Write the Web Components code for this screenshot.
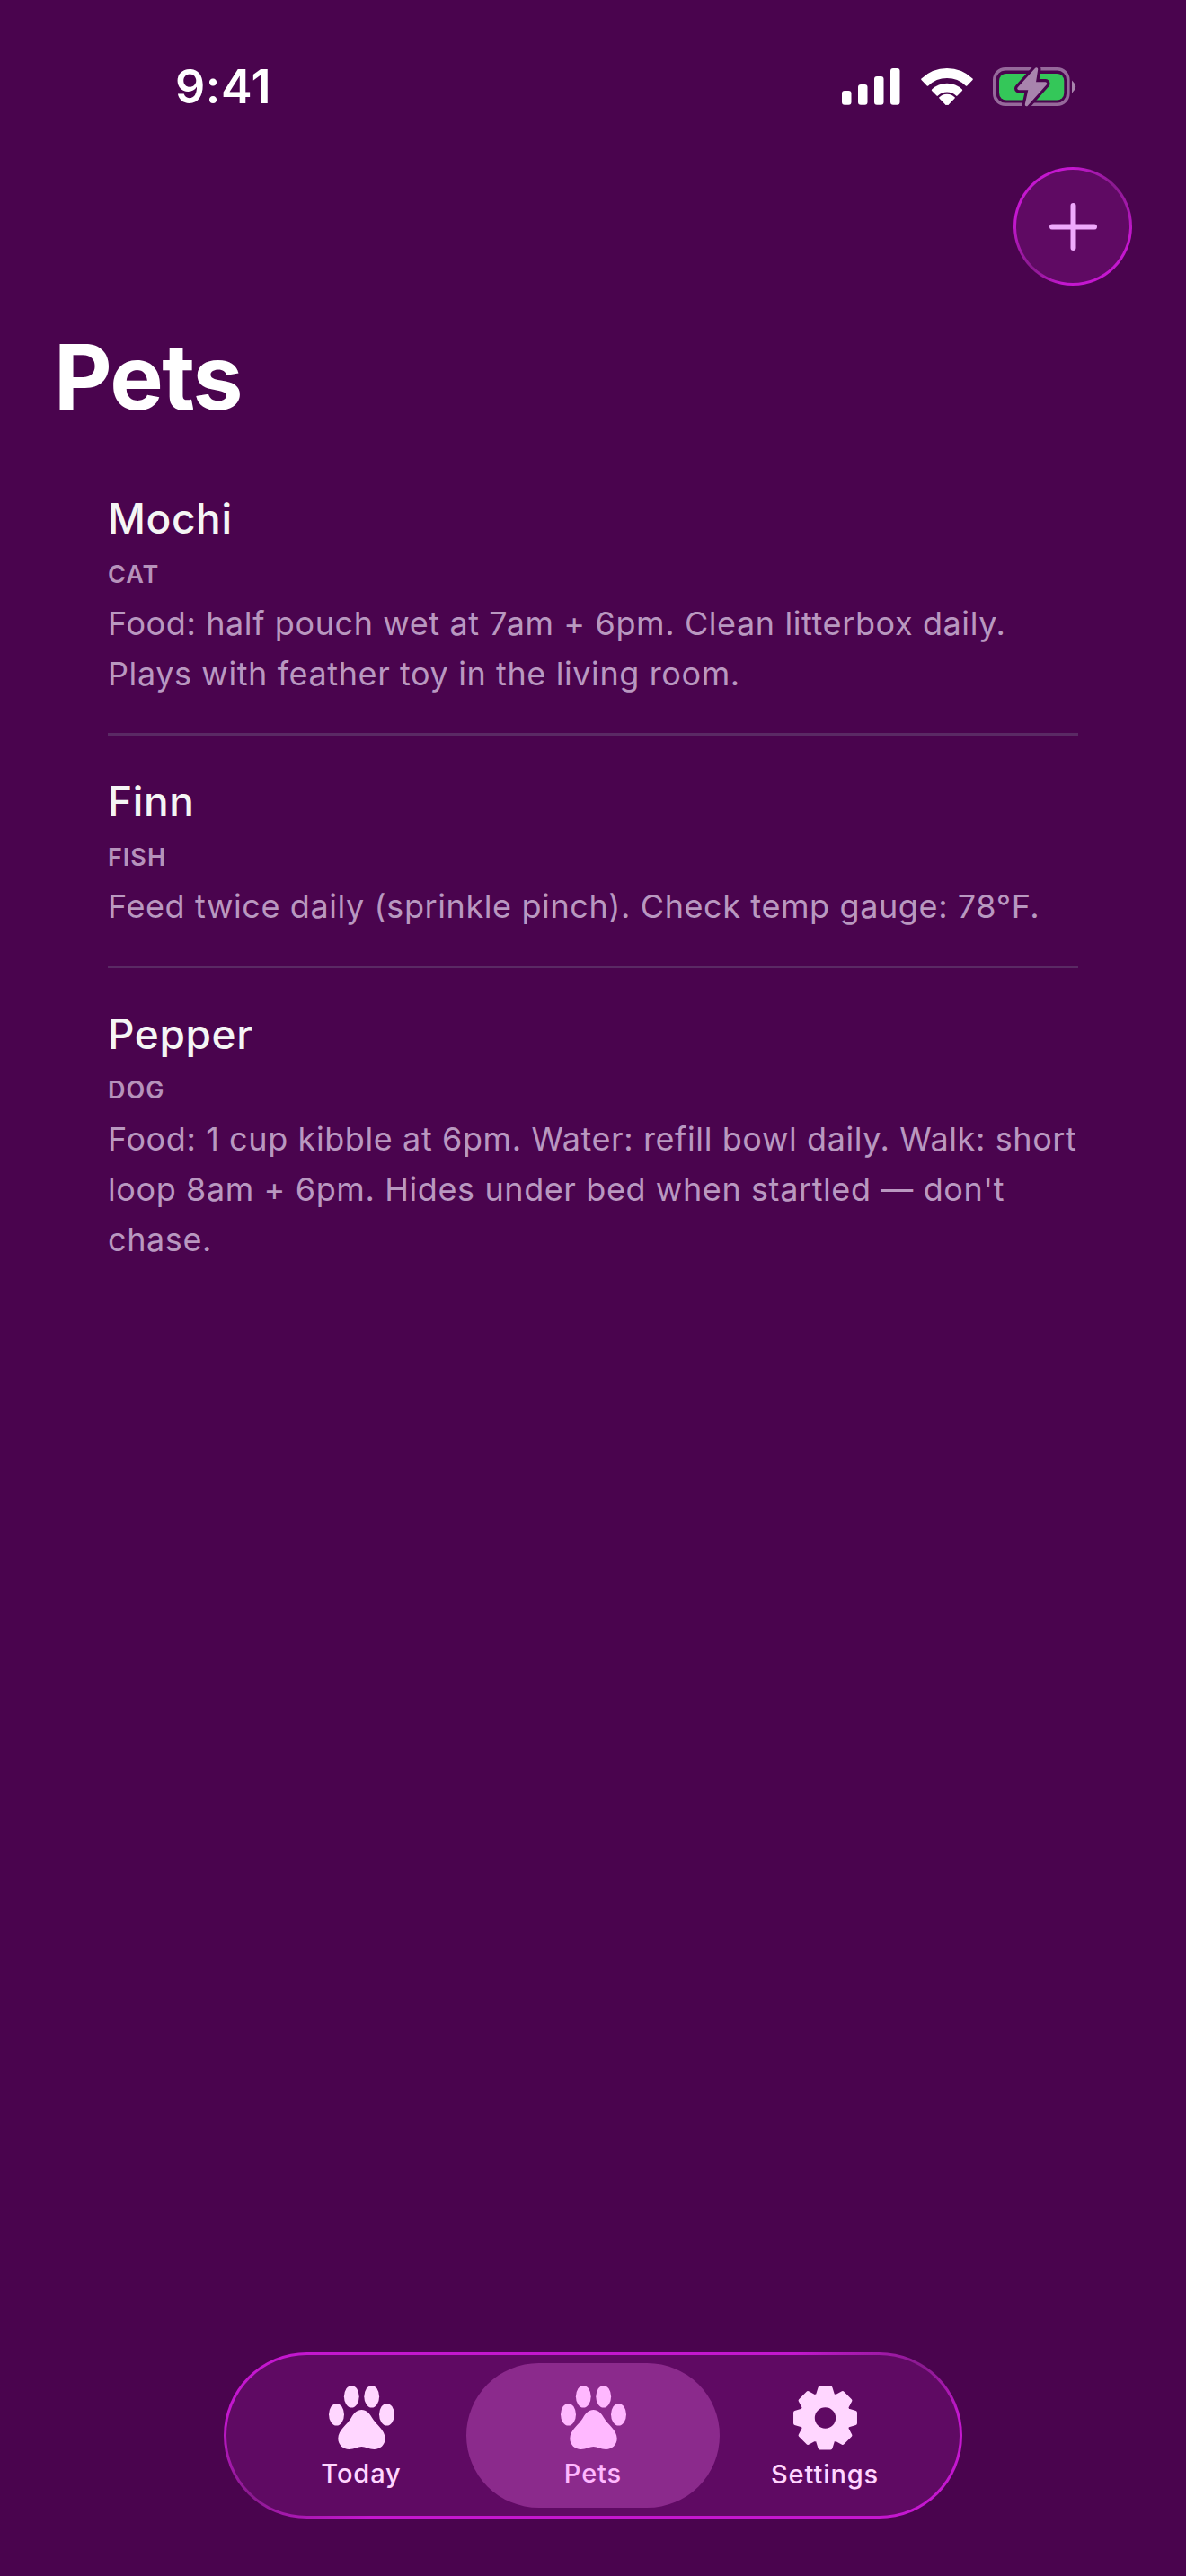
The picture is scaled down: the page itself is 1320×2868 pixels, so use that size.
<!DOCTYPE html>
<html lang="en"><head><meta charset="utf-8"><title>Pets</title>
<style>
html,body{margin:0;padding:0;background:#4a044e;height:2868px;overflow:hidden}
body{font-family:Inter,"Liberation Sans",sans-serif}
</style></head><body>
<app-screen>
  <status-bar slot="top" time="9:41"></status-bar>
  <fab-button slot="top"></fab-button>
  <page-title slot="top">Pets</page-title>
  <pet-row name="Mochi" kind="CAT">Food: half pouch wet at 7am + 6pm. Clean litterbox daily. Plays with feather toy in the living room.</pet-row>
  <pet-row name="Finn" kind="FISH">Feed twice daily (sprinkle pinch). Check temp gauge: 78°F.</pet-row>
  <pet-row name="Pepper" kind="DOG" last>Food: 1 cup kibble at 6pm. Water: refill bowl daily. Walk: short loop 8am + 6pm. Hides under bed when startled — don't chase.</pet-row>
  <tab-bar slot="bottom">
    <tab-item icon="paw">Today</tab-item>
    <tab-item icon="paw" active>Pets</tab-item>
    <tab-item icon="gear">Settings</tab-item>
  </tab-bar>
</app-screen>
<script>
function shadow(el,html){el.attachShadow({mode:'open'}).innerHTML=html}
const PAW=`<svg width="73" height="71" viewBox="0 0 73 71" fill="currentColor"><ellipse cx="25.3" cy="12.3" rx="8.4" ry="12.3"/><ellipse cx="47.7" cy="12.3" rx="8.4" ry="12.3"/><ellipse cx="8.5" cy="32.3" rx="8.5" ry="12.3"/><ellipse cx="64.5" cy="32.3" rx="8.5" ry="12.3"/><path d="M36.5 27C42 27 45 30.5 48.2 36C52 43 62.7 49 62.7 59C62.7 66 57 71 50.5 71C44.5 71 41 68 36.5 68C32 68 28.5 71 22.5 71C16 71 10.3 66 10.3 59C10.3 49 21 43 24.8 36C28 30.5 31 27 36.5 27Z"/></svg>`;
function gearPath(){
  const c=36,R=34,r=26.5,n=8;let d='';
  const pt=(rad,a)=>(c+rad*Math.sin(a)).toFixed(2)+' '+(c-rad*Math.cos(a)).toFixed(2);
  for(let i=0;i<n;i++){
    const a=i*Math.PI/4,tip=.177,base=.33;
    d+=(i?'L':'M')+pt(r,a-base)+'L'+pt(R,a-tip)+'L'+pt(R,a+tip)+'L'+pt(r,a+base);
  }
  d+='Z';
  const h=13.7;
  d+=`M${c-h} ${c}a${h} ${h} 0 1 0 ${2*h} 0a${h} ${h} 0 1 0 ${-2*h} 0Z`;
  return d;
}
const GEAR=`<svg width="73" height="72" viewBox="0 0 72 72"><path d="${gearPath()}" fill="currentColor" fill-rule="evenodd" stroke="currentColor" stroke-width="4" stroke-linejoin="round"/></svg>`;
function band(ro,ri,deg){
  const t=deg*Math.PI/180,s=Math.sin(t),k=Math.cos(t),cx=29,cy=41;
  return `M${(cx-ro*s).toFixed(2)} ${(cy-ro*k).toFixed(2)}A${ro} ${ro} 0 0 1 ${(cx+ro*s).toFixed(2)} ${(cy-ro*k).toFixed(2)}L${(cx+ri*s).toFixed(2)} ${(cy-ri*k).toFixed(2)}A${ri} ${ri} 0 0 0 ${(cx-ri*s).toFixed(2)} ${(cy-ri*k).toFixed(2)}Z`;
}
const BOLT='M48.5 3L29 24.5L41.5 24.5L37.5 42.5L58.5 19L46 19Z';

customElements.define('app-screen',class extends HTMLElement{constructor(){super();shadow(this,`<style>
:host{display:flex;flex-direction:column;height:2868px;width:1320px;background:#4a044e;color:#fff;overflow:hidden}
.list{display:flex;flex-direction:column;padding:0 120px}
.bottom{margin-top:auto;display:flex;justify-content:center;padding-bottom:64px}
</style><slot name="top"></slot><div class="list"><slot></slot></div><div class="bottom"><slot name="bottom"></slot></div>`)}});

customElements.define('status-bar',class extends HTMLElement{constructor(){super();shadow(this,`<style>
:host{display:flex;align-items:flex-start;height:186px;box-sizing:border-box;padding:74px 122px 0 195px;justify-content:space-between}
.time{font:600 52px/46px Inter,sans-serif;color:#fff;letter-spacing:.6px}
.icons{display:flex;align-items:flex-start;gap:23px}
svg{display:block}
.sig{margin-top:2px}.wifi{margin-top:1.7px}
</style><span class="time">${this.getAttribute('time')}</span>
<div class="icons">
<svg class="sig" width="65" height="41" viewBox="0 0 65 41" fill="#fff"><rect x="0" y="25" width="10.5" height="15.7" rx="3"/><rect x="18" y="18" width="10.5" height="22.7" rx="3"/><rect x="36" y="9" width="10.5" height="31.7" rx="3"/><rect x="54" y="0" width="10.5" height="40.7" rx="3"/></svg>
<svg class="wifi" width="58" height="41" viewBox="0 0 58 41" fill="#fff" stroke="#fff" stroke-width="2" stroke-linejoin="round"><path d="${band(40,31,44)}"/><path d="${band(23.3,15.5,44)}"/><path d="${band(11.3,1.3,44)}"/></svg>
<svg width="93" height="46" viewBox="0 0 93 46" style="margin-left:-1px"><rect x="1.8" y="2.8" width="82" height="39.5" rx="12" fill="none" stroke="#96699b" stroke-width="3.6"/><rect x="7" y="8" width="72.3" height="29.6" rx="8" fill="#34c759"/><path d="M88 15.5l3 3.5c1.5 2 1.5 5 0 7l-3 3.8z" fill="#a884ad"/><path d="${BOLT}" fill="#4a044e" stroke="#4a044e" stroke-width="10" stroke-linejoin="round"/><path d="${BOLT}" fill="#a884ad" stroke="#a884ad" stroke-width="3.5" stroke-linejoin="round"/></svg>
</div>`)}});

customElements.define('fab-button',class extends HTMLElement{constructor(){super();shadow(this,`<style>
:host{display:flex;justify-content:flex-end;padding-right:60px}
button{all:unset;box-sizing:border-box;width:132px;height:132px;border-radius:50%;border:3px solid transparent;display:flex;align-items:center;justify-content:center;
background:linear-gradient(#5f0a63,#5f0a63) padding-box,conic-gradient(from 0deg,#c417cf 0deg,#8a1a8f 45deg,#c417cf 100deg,#c417cf 190deg,#8a1a8f 225deg,#c417cf 275deg,#c417cf 360deg) border-box}
</style><button aria-label="Add"><svg width="53" height="53" viewBox="0 0 53 53" fill="none" stroke="#efaafc" stroke-width="6" stroke-linecap="round"><path d="M26.5 3V50M3 26.5H50"/></svg></button>`)}});

customElements.define('page-title',class extends HTMLElement{constructor(){super();shadow(this,`<style>
:host{display:block;box-sizing:border-box;height:186px;padding:47px 60px 0;font:700 100px/110px Inter,sans-serif;letter-spacing:-1.6px;color:#fff}
</style><slot></slot>`)}});

customElements.define('pet-row',class extends HTMLElement{constructor(){super();const last=this.hasAttribute('last');shadow(this,`<style>
:host{display:block;box-sizing:border-box;padding:43px 0 ${last?0:38}px;${last?'':'border-bottom:3px solid #5a2a64;'}}
.name{font:500 46px/60px Inter,sans-serif;letter-spacing:.6px;color:#f5f5f5}
.kind{font:600 27px/37px Inter,sans-serif;color:#b692bb;letter-spacing:1px;margin-top:14px}
.body{font:400 36px/56px Inter,sans-serif;letter-spacing:.6px;color:#b998c0;margin-top:8px}
</style><div class="name">${this.getAttribute('name')}</div><div class="kind">${this.getAttribute('kind')}</div><div class="body"><slot></slot></div>`)}});

customElements.define('tab-bar',class extends HTMLElement{constructor(){super();shadow(this,`<style>
:host{display:grid;grid-template-columns:repeat(3,258px);box-sizing:border-box;width:822px;height:185px;padding:0 21px;border-radius:93px;border:3px solid transparent;
background:linear-gradient(#5f0a63,#5f0a63) padding-box,conic-gradient(from 0deg,#c417cf 0deg,#c417cf 68deg,#8a1a8f 78deg,#c417cf 87deg,#c417cf 250deg,#8a1a8f 260deg,#c417cf 273deg,#c417cf 360deg) border-box}
</style><slot></slot>`)}});

customElements.define('tab-item',class extends HTMLElement{constructor(){super();const on=this.hasAttribute('active');shadow(this,`<style>
:host{position:relative;display:flex;flex-direction:column;align-items:center;box-sizing:border-box;padding-top:34px;color:${on?'#ffb8ff':'#ffd6ff'}}
.pill{position:absolute;left:-12px;right:-12px;top:9px;bottom:9px;border-radius:81px;background:#8b2a8c}
svg{display:block;position:relative}
.label{position:relative;font:500 29px/36px Inter,sans-serif;letter-spacing:.9px;margin-top:9px}
</style>${on?'<div class="pill"></div>':''}${this.getAttribute('icon')==='gear'?GEAR:PAW}<span class="label"><slot></slot></span>`)}});
</script></body></html>
